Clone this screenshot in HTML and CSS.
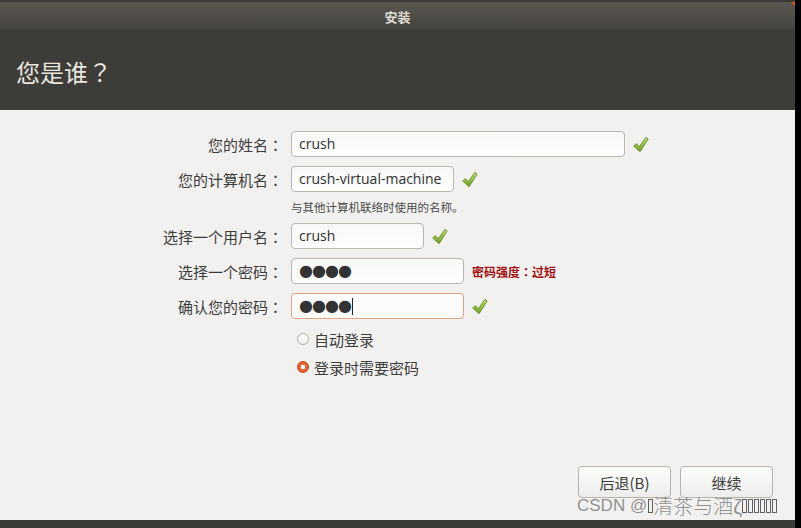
FILE: index.html
```html
<!DOCTYPE html>
<html>
<head>
  <meta charset="UTF-8">
  <title>安装</title>
  <link rel="stylesheet" href="styles.css">
</head>
<body>
  <div class="window">
    <div class="titlebar">
      <span class="title">安装</span>
      <span class="corner"></span>
    </div>

    <div class="header">
      <h1>您是谁<span class="punct">？</span></h1>
    </div>

    <div class="content">
      <div class="form">
        <div class="row">
          <label>您的姓名<span class="punct">：</span></label>
          <div class="field name">crush</div>
          <svg class="check" viewBox="0 0 16 16"><use href="#tick"/></svg>
        </div>

        <div class="row tight">
          <label>您的计算机名<span class="punct">：</span></label>
          <div class="field host">crush-virtual-machine</div>
          <svg class="check" viewBox="0 0 16 16"><use href="#tick"/></svg>
        </div>
        <div class="hint">与其他计算机联络时使用的名称。</div>

        <div class="row">
          <label>选择一个用户名<span class="punct">：</span></label>
          <div class="field user">crush</div>
          <svg class="check" viewBox="0 0 16 16"><use href="#tick"/></svg>
        </div>

        <div class="row">
          <label>选择一个密码<span class="punct">：</span></label>
          <div class="field pass dots">●●●●</div>
          <span class="strength">密码强度<span class="punct">：</span>过短</span>
        </div>

        <div class="row">
          <label>确认您的密码<span class="punct">：</span></label>
          <div class="field pass dots focus">●●●●<span class="caret"></span></div>
          <svg class="check" viewBox="0 0 16 16"><use href="#tick"/></svg>
        </div>

        <div class="options">
          <div class="option"><span class="radio"></span>自动登录</div>
          <div class="option"><span class="radio on"></span>登录时需要密码</div>
        </div>
      </div>

      <div class="buttons">
        <button class="btn">后退(B)</button>
        <button class="btn">继续</button>
      </div>

      <div class="watermark">CSDN @<span class="tofu"></span><span class="wm-name">清茶与酒ζ</span><span class="tofu"></span><span class="tofu"></span><span class="tofu"></span><span class="tofu"></span><span class="tofu"></span><span class="tofu"></span></div>
    </div>

    <div class="bottom"></div>
  </div>

  <svg width="0" height="0" style="position:absolute">
    <defs>
      <linearGradient id="tickFill" x1="0" y1="0" x2="0" y2="1">
        <stop offset="0" stop-color="#c2e07a"/>
        <stop offset="1" stop-color="#6f9f24"/>
      </linearGradient>
      <symbol id="tick" viewBox="0 0 16 16">
        <path d="M1.6 9.4 L4.2 7.2 L6.8 10.2 L13.2 1.2 L15.2 2.8 L7.6 14.8 Z" fill="url(#tickFill)" stroke="#5f8d1c" stroke-width="0.8" stroke-linejoin="round"/>
      </symbol>
    </defs>
  </svg>
</body>
</html>
```

FILE: styles.css
```css
body {
  margin: 0;
  background-color: #000;
  font-family: 'Noto Sans CJK SC', sans-serif;
  color: #3c3c3c;
}

.window {
  width: 795px;
  height: 528px;
  display: flex;
  flex-direction: column;
  background-color: #f2f1f0;
}

.titlebar {
  height: 28px;
  border-top: 2px solid #3a3935;
  background: linear-gradient(to bottom, #5a5750, #45433e);
  display: flex;
  align-items: center;
  justify-content: center;
  position: relative;
}

.title {
  color: #dfdbd2;
  font-size: 13px;
  font-weight: bold;
}

.corner {
  position: absolute;
  top: 0;
  right: 0;
  width: 0;
  height: 0;
  border-top: 4px solid #e0521d;
  border-left: 4px solid transparent;
}

.header {
  height: 80px;
  background-color: #3d3c38;
  display: flex;
  align-items: center;
  padding-left: 16px;
}

.header h1 {
  margin: 0;
  font-size: 24px;
  font-weight: normal;
  color: #e9e6df;
  padding-top: 2px;
}

/* full-width punctuation, centred in its own cell */
.punct {
  display: inline-block;
  width: 1em;
  text-align: center;
  font-family: 'Noto Sans CJK TC', sans-serif;
}

.content {
  flex: 1;
  position: relative;
  display: flex;
  flex-direction: column;
  padding-top: 21px;
}

.form {
  flex: 1;
}

.row {
  display: flex;
  align-items: center;
  height: 26px;
  margin-bottom: 9px;
}

.row.tight {
  margin-bottom: 0;
}

.row label {
  width: 283px;
  text-align: right;
  font-size: 15px;
  margin-right: 8px;
  color: #3c3c3c;
}

.field {
  box-sizing: border-box;
  height: 26px;
  border: 1px solid #b9b6b0;
  border-radius: 4px;
  background: linear-gradient(to bottom, #f7f7f6, #ffffff);
  padding-left: 7px;
  font-family: 'Open Sans', sans-serif;
  font-size: 14px;
  line-height: 24px;
  color: #2f2f2f;
  display: flex;
  align-items: center;
}

.field.name { width: 334px; }
.field.host { width: 163px; }
.field.user { width: 133px; }
.field.pass { width: 173px; }

.field.dots {
  font-family: 'DejaVu Sans', sans-serif;
  font-size: 16px;
  letter-spacing: -1px;
  color: #333;
}

.field.focus {
  border-color: #e4a283;
  background: #fbfbfb;
}

.caret {
  display: inline-block;
  width: 1px;
  height: 17px;
  background-color: #222;
  margin-left: 1px;
}

.check {
  width: 17px;
  height: 17px;
  margin-left: 7px;
}

.strength {
  margin-left: 8px;
  font-size: 12px;
  font-weight: bold;
  color: #a20f0f;
}

.hint {
  height: 31px;
  line-height: 31px;
  padding-left: 291px;
  font-size: 11.5px;
  color: #4a4a4a;
}

.options {
  padding-left: 297px;
  margin-top: -3px;
}

.option {
  display: flex;
  align-items: center;
  height: 28px;
  font-size: 15px;
}

.radio {
  box-sizing: border-box;
  width: 12px;
  height: 12px;
  border-radius: 50%;
  border: 1px solid #b0ada7;
  background: linear-gradient(to bottom, #ffffff, #ededeb);
  margin-right: 5px;
}

.radio.on {
  border-color: #c44817;
  background: radial-gradient(circle, #ffffff 0, #ffffff 2px, #e8642f 2.6px, #e0582a 100%);
}

.buttons {
  display: flex;
  justify-content: flex-end;
  gap: 9px;
  padding-right: 22px;
  padding-bottom: 22px;
}

.btn {
  width: 93px;
  height: 32px;
  border: 1px solid #b6b3ad;
  border-radius: 4px;
  background: linear-gradient(to bottom, #fcfcfb, #eeedeb);
  font-family: 'Noto Sans CJK SC', sans-serif;
  font-size: 15px;
  color: #3c3c3c;
}

.watermark {
  position: absolute;
  left: 577px;
  bottom: 0;
  font-family: 'Liberation Sans', 'Noto Sans CJK SC', sans-serif;
  font-size: 17px;
  color: rgba(100, 100, 100, 0.7);
  white-space: nowrap;
  display: flex;
  align-items: center;
}

.wm-name {
  font-size: 20px;
  font-weight: 300;
}

.tofu {
  display: inline-block;
  box-sizing: border-box;
  width: 5px;
  height: 14px;
  border: 1px solid rgba(60, 60, 60, 0.8);
  margin: 0 0.5px;
}

.bottom {
  height: 8px;
  background-color: #3d3b36;
}
```
